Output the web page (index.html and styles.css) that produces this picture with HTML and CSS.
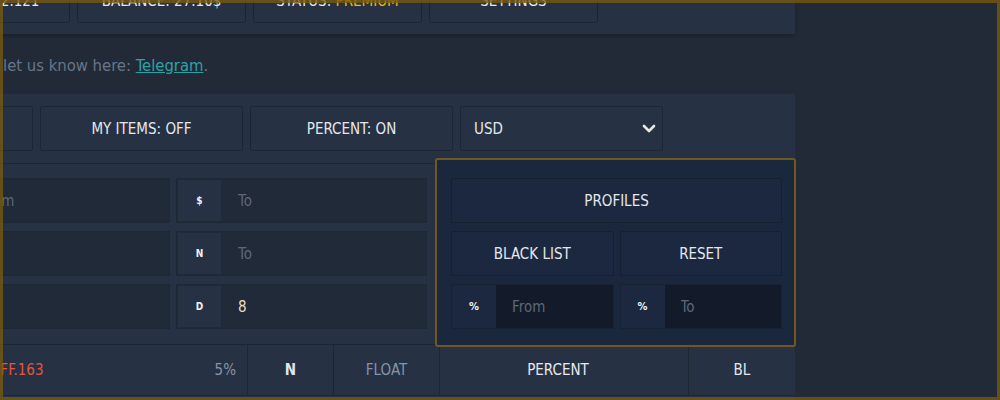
FILE: index.html
```html
<!DOCTYPE html>
<html lang="en">
<head>
<meta charset="utf-8">
<title>Market filters</title>
<link rel="stylesheet" href="styles.css">
</head>
<body>
<div class="frame"></div>
<div class="page">
  <header class="topbar">
    <div class="tbtn"><span>VERSION: 2.121</span></div>
    <div class="tbtn"><span>BALANCE: 27.10$</span></div>
    <div class="tbtn"><span>STATUS: <span class="premium">PREMIUM</span></span></div>
    <div class="tbtn"><span>SETTINGS</span></div>
  </header>

  <p class="note"><span>let us know here: <a class="link" href="#">Telegram</a>.</span></p>

  <section class="panel">
    <div class="toolbar">
      <div class="btn">SHOW: ALL</div>
      <div class="btn">MY ITEMS: OFF</div>
      <div class="btn">PERCENT: ON</div>
      <div class="select">
        <span>USD</span>
        <svg class="chev" width="14" height="10" viewBox="0 0 14 10"><polyline points="2,2 7,7 12,2" fill="none" stroke="#e6e6e6" stroke-width="2.6" stroke-linecap="round" stroke-linejoin="round"/></svg>
      </div>
    </div>

    <div class="filters">
      <div class="inputs">
        <div class="group"><span class="addon">$</span><input class="field" placeholder="From"></div>
        <div class="group"><span class="addon">$</span><input class="field" placeholder="To"></div>
        <div class="group"><span class="addon">N</span><input class="field"></div>
        <div class="group"><span class="addon">N</span><input class="field" placeholder="To"></div>
        <div class="group"><span class="addon">D</span><input class="field"></div>
        <div class="group"><span class="addon">D</span><input class="field" value="8"></div>
      </div>

      <div class="goldbox">
        <div class="gbtn wide">PROFILES</div>
        <div class="gbtn">BLACK LIST</div>
        <div class="gbtn">RESET</div>
        <div class="ggroup"><span class="gaddon">%</span><input class="gfield" placeholder="From"></div>
        <div class="ggroup"><span class="gaddon">%</span><input class="gfield" placeholder="To"></div>
      </div>
    </div>

    <div class="thead">
      <div class="cell first"><span class="name">DIFF.163</span><span class="pct">5%</span></div>
      <div class="cell c-n">N</div>
      <div class="cell c-float">FLOAT</div>
      <div class="cell c-percent">PERCENT</div>
      <div class="cell c-bl">BL</div>
    </div>
  </section>
</div>
</body>
</html>
```

FILE: styles.css
```css
* { box-sizing: border-box; }

html, body {
  margin: 0;
  height: 100%;
}

body {
  background: #222a37;
  overflow: hidden;
  font-family: "DejaVu Sans Condensed", "DejaVu Sans", sans-serif;
  font-stretch: condensed;
  font-size: 15px;
  color: #e4e8ee;
}

.frame {
  position: fixed;
  inset: 0;
  border: 3px solid rgba(122, 90, 14, 0.78);
  pointer-events: none;
  z-index: 10;
}

.page {
  margin: -32px 0 0 -182px;
  width: 977px;
}

/* top bar */
.topbar {
  display: flex;
  gap: 7px;
  padding: 11px 0 11px 83px;
  background: #263244;
  box-shadow: 0 2px 4px rgba(0, 0, 0, 0.25);
}

.tbtn {
  width: 169px;
  height: 44px;
  display: flex;
  align-items: center;
  justify-content: center;
  border: 1px solid #1e2633;
  border-radius: 2px;
}

.premium { color: #f2b705; }

/* note */
.note {
  margin: 0;
  height: 60px;
  padding: 2px 0 0 185px;
  display: flex;
  align-items: center;
  font-size: 16.5px;
  color: #66768a;
}

.link {
  color: #2aa2a8;
  text-decoration: underline;
}

/* panel */
.panel {
  background: #263244;
  padding-top: 12px;
  height: 400px;
}

.toolbar {
  display: flex;
  gap: 7px;
  padding-left: 12px;
}

.btn, .select {
  width: 203px;
  height: 45px;
  border: 1px solid #1e2633;
  border-radius: 2px;
  display: flex;
  align-items: center;
}

.btn { justify-content: center; }

.select {
  justify-content: space-between;
  padding: 0 6px 0 13px;
}

/* filters */
.filters {
  display: flex;
  align-items: flex-start;
  margin-top: 7px;
  padding-left: 101px;
}

.inputs {
  flex-shrink: 0;
  margin-top: 5px;
  border-top: 1px solid #1e2633;
  padding: 14px 8px 15px 0;
  display: grid;
  grid-template-columns: 251px 251px;
  grid-auto-rows: 45px;
  column-gap: 6px;
  row-gap: 8px;
}

.group {
  display: flex;
  background: #212a38;
  border: 1px solid #1f2734;
  padding: 1px 0 1px 1px;
}

.addon {
  width: 43px;
  flex-shrink: 0;
  display: flex;
  align-items: center;
  justify-content: center;
  background: #263244;
  font-size: 10px;
  font-weight: bold;
  color: #eef1f6;
}

.field, .gfield {
  flex: 1;
  width: 0;
  min-width: 0;
  border: 0;
  outline: 0;
  background: transparent;
  font: inherit;
  font-size: 15px;
  color: #eadfc4;
  padding: 0 0 0 17px;
}

.field::placeholder, .gfield::placeholder { color: #5c6879; }

/* gold box */
.goldbox {
  position: relative;
  z-index: 2;
  flex-shrink: 0;
  width: 361px;
  margin-bottom: -3px;
  border: 2px solid #6f5920;
  border-radius: 3px;
  background: #1b273d;
  padding: 18px 12px 16px 14px;
  display: grid;
  grid-template-columns: repeat(2, minmax(0, 1fr));
  grid-auto-rows: 45px;
  column-gap: 6px;
  row-gap: 8px;
}

.gbtn {
  display: flex;
  align-items: center;
  justify-content: center;
  border: 1px solid #152031;
  border-radius: 2px;
  background: #1c2840;
}

.gbtn.wide { grid-column: 1 / 3; }

.ggroup {
  display: flex;
  min-width: 0;
  background: #131b2a;
  border: 1px solid #172234;
}

.gaddon {
  width: 44px;
  flex-shrink: 0;
  display: flex;
  align-items: center;
  justify-content: center;
  background: #1c2840;
  font-size: 11px;
  font-weight: bold;
  color: #eef1f6;
}

.gfield { padding-left: 16px; }

/* table header */
.thead {
  display: flex;
  height: 52px;
  border-top: 1px solid #1e2633;
  border-bottom: 1px solid #1e2633;
}

.cell {
  display: flex;
  align-items: center;
  justify-content: center;
  border-left: 1px solid #1e2633;
}

.cell.first {
  width: 429px;
  border-left: 0;
  justify-content: space-between;
  padding: 0 11px 0 168px;
}

.name { color: #e3553e; }
.pct { color: #8595a7; }

.c-n { width: 86px; color: #e0e6ef; font-weight: bold; }
.c-float { width: 106px; color: #8595a7; }
.c-percent { width: 249px; padding-right: 12px; color: #e6eaf0; }
.c-bl { width: 107px; color: #e0e6ef; }
```
